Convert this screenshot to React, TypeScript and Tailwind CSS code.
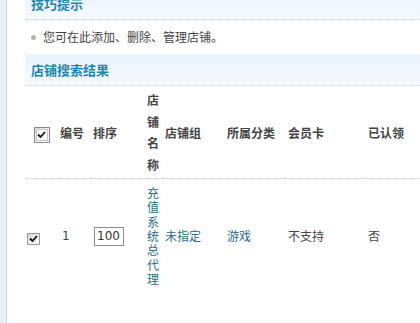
import React from 'react';

function BigCheck() {
  return (
    <span className="inline-flex h-[16px] w-[16px] items-center justify-center border border-[#8a8a8a] bg-gradient-to-br from-[#dcdcd6] to-[#ffffff] align-middle">
      <span className="flex h-[12px] w-[12px] items-center justify-center border border-[#c8c8c0] bg-white">
        <svg width="9" height="8" viewBox="0 0 9 8">
          <path d="M1 3.5 L3.5 6 L8 1" stroke="#111" strokeWidth="1.8" fill="none" />
        </svg>
      </span>
    </span>
  );
}

function SmallCheck() {
  return (
    <span className="inline-flex h-[12px] w-[13px] items-center justify-center border border-[#9a9a9a] bg-gradient-to-br from-[#dadad4] to-white align-middle">
      <svg width="9" height="8" viewBox="0 0 9 8">
        <path d="M1 3.5 L3.5 6 L8 1" stroke="#111" strokeWidth="1.8" fill="none" />
      </svg>
    </span>
  );
}

const th = 'pl-[3px] pr-[3px] pt-[3px] pb-[2px] text-left align-middle text-[12px] font-bold leading-[21.7px] text-[#444]';
const tdBase = 'pl-[3px] pr-[3px] pt-[7px] pb-[3px] align-middle text-[12px] leading-[14.4px]';
const td = `${tdBase} text-[#444]`;
const tdLink = `${tdBase} text-[#2a6a8c]`;

export default function App() {
  return (
    <div className="flex h-[323px] w-[420px] overflow-hidden bg-white font-['Noto_Sans_CJK_SC',sans-serif]">
      <div className="w-[7px] shrink-0 border-r border-[#c3d8ee] bg-[#e9f1fb]" />

      <div className="flex-1 pl-[18px]">
        {/* tips */}
        <div className="h-[23px] border-b border-dotted border-[#c9d3de] bg-gradient-to-b from-[#edf5fd] to-[#f6f9fe] pl-[6px]">
          <div className="-mt-[3px] text-[13px] font-bold leading-[13px] text-[#1e86b4]">技巧提示</div>
        </div>
        <div className="flex h-[34px] items-center pl-[6px]">
          <span className="mr-[7px] h-[5px] w-[5px] rounded-full bg-[#b4b4b4]" />
          <span className="text-[12px] text-[#444]">您可在此添加、删除、管理店铺。</span>
        </div>

        {/* search results */}
        <div className="flex h-[32px] items-center border-b border-dotted border-[#c9d3de] bg-gradient-to-b from-[#eaf4fd] to-[#f6f9fe] pl-[6px]">
          <span className="text-[13px] font-bold text-[#1e86b4]">店铺搜索结果</span>
        </div>

        <table className="w-[395px] table-fixed border-collapse">
          <colgroup>
            <col className="w-[32px]" />
            <col className="w-[33px]" />
            <col className="w-[54px]" />
            <col className="w-[18px]" />
            <col className="w-[62px]" />
            <col className="w-[61px]" />
            <col className="w-[80px]" />
            <col />
          </colgroup>
          <thead>
            <tr className="border-b border-dotted border-[#cccccc]">
              <th className="pl-[1px] align-middle">
                <BigCheck />
              </th>
              <th className={th}>编号</th>
              <th className={th}>排序</th>
              <th className={th}>店铺名称</th>
              <th className={th}>店铺组</th>
              <th className={th}>所属分类</th>
              <th className={th}>会员卡</th>
              <th className={th}>已认领</th>
            </tr>
          </thead>
          <tbody>
            <tr>
              <td className="pl-[2px] pt-[4px] align-middle">
                <SmallCheck />
              </td>
              <td className={`${td} pl-[5px] font-['DejaVu_Sans',sans-serif]`}>1</td>
              <td className={`${td} pl-[4px]`}>
                <input
                  readOnly
                  value="100"
                  className="h-[19px] w-[30px] border border-[#8c8c8c] bg-white px-[2px] font-['DejaVu_Sans',sans-serif] text-[12px] text-[#333] outline-none"
                />
              </td>
              <td className={tdLink}>充值系统总代理</td>
              <td className={tdLink}>未指定</td>
              <td className={tdLink}>游戏</td>
              <td className={td}>不支持</td>
              <td className={td}>否</td>
            </tr>
          </tbody>
        </table>
      </div>
    </div>
  );
}
